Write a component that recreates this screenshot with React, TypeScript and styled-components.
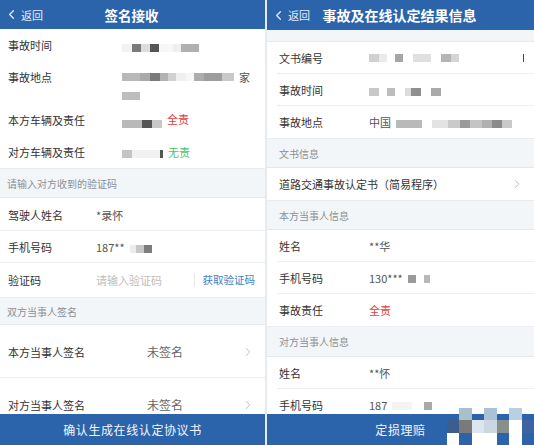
import styled, { createGlobalStyle, css } from "styled-components";
import { ChevronLeft, ChevronRight } from "lucide-react";

const BLUE = "#2c64ab";

type Cell = [number, string];

const GlobalStyle = createGlobalStyle`
  html, body { margin: 0; padding: 0; }
  body {
    font-family: "Noto Sans CJK SC", "Noto Sans", sans-serif;
    background: #e6ebf0;
  }
`;

const Screen = styled.div`
  display: flex;
  gap: 2px;
  width: 534px;
  height: 445px;
  overflow: hidden;
  background: #e6ebf0;
`;

const Panel = styled.div<{ $w: number }>`
  position: relative;
  display: flex;
  flex-direction: column;
  width: ${({ $w }) => $w}px;
  height: 100%;
  background: #fff;
  overflow: hidden;
`;

const Header = styled.header<{ $h: number }>`
  display: grid;
  grid-template-columns: 1fr auto 1fr;
  align-items: center;
  height: ${({ $h }) => $h}px;
  padding: 0 6px 0 4px;
  background: ${BLUE};
  color: #fff;
  flex-shrink: 0;
`;

const Back = styled.div`
  display: flex;
  align-items: center;
  gap: 2px;
  font-size: 11px;
  color: #e4ecf7;
`;

const Title = styled.h1<{ $size: number }>`
  margin: 0;
  font-size: ${({ $size }) => $size}px;
  font-weight: 700;
`;

const Body = styled.div`
  flex: 1;
  display: flex;
  flex-direction: column;
  overflow: hidden;
`;

const Gap = styled.div<{ $h: number }>`
  height: ${({ $h }) => $h}px;
  flex-shrink: 0;
  background: #f3f6f9;
  border-bottom: 1px solid #e7ebef;
  box-sizing: border-box;
`;

const Section = styled.div<{ $h: number; $pad: number }>`
  display: flex;
  align-items: center;
  height: ${({ $h }) => $h}px;
  flex-shrink: 0;
  padding-left: ${({ $pad }) => $pad}px;
  background: #f3f6f9;
  border-top: 1px solid #e9edf1;
  border-bottom: 1px solid #e4e8ec;
  box-sizing: border-box;
  font-size: 10px;
  color: #8a9097;
`;

const Row = styled.div<{
  $h: number;
  $label: number;
  $pad: number;
  $line?: number;
  $top?: boolean;
}>`
  position: relative;
  display: grid;
  grid-template-columns: ${({ $label }) => $label}px 1fr auto;
  align-items: ${({ $top }) => ($top ? "start" : "center")};
  height: ${({ $h }) => $h}px;
  flex-shrink: 0;
  padding: ${({ $top }) => ($top ? "8px" : "0")} 10px 0 ${({ $pad }) => $pad}px;
  box-sizing: border-box;
  font-size: 11px;
  line-height: 16px;
  color: #333;
  ${({ $line }) =>
    $line !== undefined &&
    css`
      &::after {
        content: "";
        position: absolute;
        left: ${$line}px;
        right: 0;
        bottom: 0;
        height: 1px;
        background: #eceff2;
      }
    `}
`;

const Label = styled.span`
  color: #333;
  white-space: nowrap;
`;

const tones: Record<string, string> = {
  base: "#555",
  red: "#e2403c",
  green: "#4cc36b",
  muted: "#bdbdbd",
  sign: "#666",
};

const Value = styled.span<{ $tone?: string; $size?: number }>`
  display: flex;
  align-items: center;
  gap: 0 5px;
  color: ${({ $tone }) => tones[$tone ?? "base"]};
  font-size: ${({ $size }) => $size ?? 11}px;
  white-space: nowrap;
`;

const Lines = styled.span`
  display: flex;
  flex-direction: column;
  gap: 3px;
`;

const Tag = styled.span<{ $tone: string; $lift?: number }>`
  color: ${({ $tone }) => tones[$tone]};
  font-size: 11px;
  margin-top: ${({ $lift }) => -($lift ?? 0)}px;
`;

const Strip = styled.span<{ $drop?: number }>`
  display: inline-flex;
  flex-shrink: 0;
  height: 8px;
  margin-top: ${({ $drop }) => $drop ?? 0}px;
`;

const Bit = styled.span<{ $w: number; $c: string }>`
  width: ${({ $w }) => $w}px;
  height: 100%;
  background: ${({ $c }) => $c};
`;

const GetCode = styled.span`
  padding-left: 8px;
  border-left: 1px solid #e6e6e6;
  line-height: 14px;
  color: #3d80c6;
  font-size: 10.5px;
`;

const Arrow = styled(ChevronRight)`
  color: #b3b3b3;
`;

const Footer = styled.footer`
  display: flex;
  align-items: center;
  justify-content: center;
  height: 31px;
  flex-shrink: 0;
  background: ${BLUE};
  color: #f2f6fb;
  font-size: 12px;
  letter-spacing: 0.6px;
`;

const Watermark = styled.div`
  position: absolute;
  right: 0;
  bottom: 0;
  display: grid;
  grid-template-columns: repeat(7, 12.5px);
  grid-auto-rows: 12.5px;
`;

const Mark = styled.span<{ $c: string }>`
  background: ${({ $c }) => $c};
`;

function Mosaic({ cells, drop }: { cells: Cell[]; drop?: number }) {
  return (
    <Strip $drop={drop}>
      {cells.map(([w, c], i) => (
        <Bit key={i} $w={w} $c={c} />
      ))}
    </Strip>
  );
}

const TIME_L: Cell[] = [
  [10, "#f2f2f2"], [9, "#7a7a7a"], [9, "#dcdcdc"], [9, "#555"], [14, "#f7f7f7"], [8, "#eeeeee"], [18, "#b0b0b0"],
];
const PLACE_L: Cell[] = [
  [18, "#b8b8b8"], [10, "#a9a9a9"], [10, "#7a7a7a"], [8, "#b2b2b2"], [8, "#d0d0d0"], [10, "#efefef"], [8, "#f7f7f7"],
  [10, "#adadad"], [18, "#9d9d9d"], [12, "#c9c9c9"],
];
const PLACE2_L: Cell[] = [[18, "#bdbdbd"]];
const OWN_L: Cell[] = [[20, "#b9b9b9"], [10, "#555"], [10, "#c8c8c8"]];
const OTHER_L: Cell[] = [[10, "#c4c4c4"], [28, "#f1f1f1"], [3, "#555"]];
const PHONE_L: Cell[] = [[6, "#ececec"], [8, "#c7c7c7"], [8, "#7d7d7d"]];

const DOC_R: Cell[] = [
  [10, "#d0d0d0"], [8, "#eaeaea"], [8, "#fff"], [8, "#a5a5a5"], [10, "#fff"], [18, "#e0e0e0"], [10, "#fff"], [10, "#b5b5b5"], [8, "#d5d5d5"],
];
const TIME_R: Cell[] = [
  [10, "#c8c8c8"], [8, "#fff"], [8, "#bdbdbd"], [10, "#fff"], [6, "#dcdcdc"], [10, "#8f8f8f"], [10, "#fff"], [10, "#aaa"],
];
const PLACE_R: Cell[] = [
  [26, "#b9b9b9"], [10, "#fff"], [16, "#e3e3e3"], [12, "#cacaca"], [10, "#9a9a9a"], [12, "#c4c4c4"], [10, "#b0b0b0"], [10, "#8a8a8a"], [10, "#c9c9c9"],
];
const PHONE_R: Cell[] = [[8, "#9a9a9a"], [8, "#fff"], [6, "#b8b8b8"]];
const PHONE2_R: Cell[] = [[20, "#f4f4f4"], [12, "#fff"], [8, "#a9a9a9"]];

const MARKS = [
  "transparent", "#a9c0cb", "transparent", "#aac1d7", "transparent", "#b9cfe2", "transparent",
  "#3c5e8c", "#7a7a7a", "#dde6ee", "#cbd7e2", "#888f8f", "#ffffff", "#3c64a0",
  "#ffffff", "#2c64ab", "#ffffff", "#ffffff", "#2c64ab", "#ffffff", "#2c64ab",
];

function SignPage() {
  return (
    <Panel $w={265}>
      <Header $h={29}>
        <Back>
          <ChevronLeft size={15} strokeWidth={2} />
          返回
        </Back>
        <Title $size={13.5}>签名接收</Title>
        <span />
      </Header>
      <Body>
        <Row $h={32} $label={114} $pad={8}>
          <Label>事故时间</Label>
          <Value>
            <Mosaic cells={TIME_L} drop={6} />
          </Value>
        </Row>
        <Row $h={42} $label={114} $pad={8} $top>
          <Label>事故地点</Label>
          <Lines>
            <Value>
              <Mosaic cells={PLACE_L} />
              家
            </Value>
            <Mosaic cells={PLACE2_L} drop={4} />
          </Lines>
        </Row>
        <Row $h={33} $label={114} $pad={8}>
          <Label>本方车辆及责任</Label>
          <Value>
            <Mosaic cells={OWN_L} drop={8} />
            <Tag $tone="red" $lift={2}>全责</Tag>
          </Value>
        </Row>
        <Row $h={32} $label={114} $pad={8}>
          <Label>对方车辆及责任</Label>
          <Value>
            <Mosaic cells={OTHER_L} drop={4} />
            <Tag $tone="green">无责</Tag>
          </Value>
        </Row>

        <Section $h={30} $pad={7}>请输入对方收到的验证码</Section>
        <Row $h={33} $label={88} $pad={8} $line={0}>
          <Label>驾驶人姓名</Label>
          <Value $tone="base">*录怀</Value>
        </Row>
        <Row $h={32} $label={88} $pad={8} $line={0}>
          <Label>手机号码</Label>
          <Value>
            187**
            <Mosaic cells={PHONE_L} drop={4} />
          </Value>
        </Row>
        <Row $h={34} $label={88} $pad={8}>
          <Label>验证码</Label>
          <Value $tone="muted">请输入验证码</Value>
          <GetCode>获取验证码</GetCode>
        </Row>

        <Section $h={28} $pad={7}>双方当事人签名</Section>
        <Row $h={53} $label={139} $pad={8} $line={0}>
          <Label>本方当事人签名</Label>
          <Value $tone="sign" $size={12}>未签名</Value>
          <Arrow size={14} strokeWidth={1.5} />
        </Row>
        <Row $h={53} $label={139} $pad={8}>
          <Label>对方当事人签名</Label>
          <Value $tone="sign" $size={12}>未签名</Value>
          <Arrow size={14} strokeWidth={1.5} />
        </Row>
      </Body>
      <Footer>确认生成在线认定协议书</Footer>
    </Panel>
  );
}

function ResultPage() {
  return (
    <Panel $w={267}>
      <Header $h={30}>
        <Back>
          <ChevronLeft size={15} strokeWidth={2} />
          返回
        </Back>
        <Title $size={14}>事故及在线认定结果信息</Title>
        <span />
      </Header>
      <Body>
        <Gap $h={12} />
        <Row $h={32} $label={90} $pad={12} $line={10}>
          <Label>文书编号</Label>
          <Value>
            <Mosaic cells={DOC_R} />
          </Value>
          <Strip>
            <Bit $w={1} $c="#444" />
          </Strip>
        </Row>
        <Row $h={32} $label={90} $pad={12} $line={10}>
          <Label>事故时间</Label>
          <Value>
            <Mosaic cells={TIME_R} drop={4} />
          </Value>
        </Row>
        <Row $h={32} $label={90} $pad={12}>
          <Label>事故地点</Label>
          <Value>
            中国
            <Mosaic cells={PLACE_R} drop={4} />
          </Value>
        </Row>

        <Section $h={30} $pad={12}>文书信息</Section>
        <Row $h={32} $label={180} $pad={12}>
          <Label>道路交通事故认定书（简易程序）</Label>
          <span />
          <Arrow size={14} strokeWidth={1.5} />
        </Row>

        <Section $h={30} $pad={12}>本方当事人信息</Section>
        <Row $h={32} $label={90} $pad={12} $line={10}>
          <Label>姓名</Label>
          <Value>**华</Value>
        </Row>
        <Row $h={32} $label={90} $pad={12} $line={10}>
          <Label>手机号码</Label>
          <Value>
            130***
            <Mosaic cells={PHONE_R} drop={2} />
          </Value>
        </Row>
        <Row $h={32} $label={90} $pad={12}>
          <Label>事故责任</Label>
          <Value $tone="red">全责</Value>
        </Row>

        <Section $h={31} $pad={12}>对方当事人信息</Section>
        <Row $h={32} $label={90} $pad={12} $line={10}>
          <Label>姓名</Label>
          <Value>**怀</Value>
        </Row>
        <Row $h={32} $label={90} $pad={12}>
          <Label>手机号码</Label>
          <Value>
            187
            <Mosaic cells={PHONE2_R} drop={2} />
          </Value>
        </Row>
      </Body>
      <Footer>定损理赔</Footer>
      <Watermark>
        {MARKS.map((c, i) => (
          <Mark key={i} $c={c} />
        ))}
      </Watermark>
    </Panel>
  );
}

export default function App() {
  return (
    <>
      <GlobalStyle />
      <Screen>
        <SignPage />
        <ResultPage />
      </Screen>
    </>
  );
}
